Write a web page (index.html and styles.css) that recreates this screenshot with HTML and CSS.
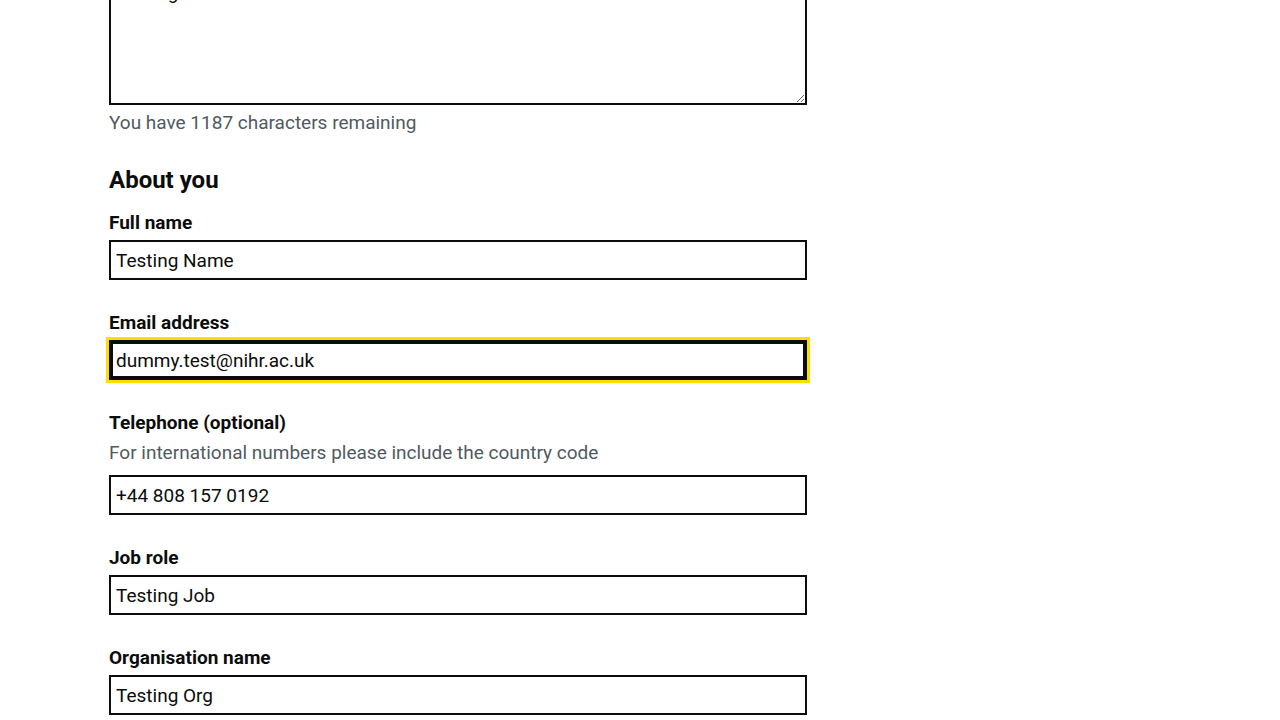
FILE: index.html
```html
<!DOCTYPE html>
<html lang="en">
<head>
<meta charset="utf-8">
<title>Contact form</title>
<link rel="stylesheet" href="styles.css">
</head>
<body>
<main class="page">
  <form class="form-column">
    <div class="form-group">
      <textarea class="textarea" rows="5">Testing</textarea>
      <div class="count-message">You have 1187 characters remaining</div>
    </div>

    <h2 class="heading">About you</h2>

    <div class="form-group">
      <label class="label" for="full-name">Full name</label>
      <input class="input" id="full-name" type="text" value="Testing Name">
    </div>

    <div class="form-group">
      <label class="label" for="email">Email address</label>
      <input class="input input-focus" id="email" type="text" value="dummy.test@nihr.ac.uk">
    </div>

    <div class="form-group">
      <label class="label" for="tel">Telephone (optional)</label>
      <div class="hint">For international numbers please include the country code</div>
      <input class="input" id="tel" type="text" value="+44 808 157 0192">
    </div>

    <div class="form-group">
      <label class="label" for="job">Job role</label>
      <input class="input" id="job" type="text" value="Testing Job">
    </div>

    <div class="form-group">
      <label class="label" for="org">Organisation name</label>
      <input class="input" id="org" type="text" value="Testing Org">
    </div>
  </form>
</main>
</body>
</html>
```
FILE: styles.css
```css
html, body {
  margin: 0;
  padding: 0;
  background: #ffffff;
  overflow: hidden;
}
body {
  font-family: Roboto, "Liberation Sans", Arial, sans-serif;
  color: #0b0c0c;
  font-size: 19px;
  line-height: 25px;
}
.page {
  padding: 0 109px;
}
.form-column {
  width: 698px;
  display: flex;
  flex-direction: column;
}
.form-group {
  display: flex;
  flex-direction: column;
  margin-bottom: 30px;
}
.textarea {
  display: block;
  box-sizing: border-box;
  width: 100%;
  height: 132px;
  margin: -27px 0 0 0;
  padding: 5px;
  border: 2px solid #0b0c0c;
  border-radius: 0;
  font-family: inherit;
  font-size: 19px;
  line-height: 25px;
  color: #0b0c0c;
  resize: vertical;
}
.count-message {
  margin-top: 5px;
  color: #505a5f;
}
.heading {
  margin: 0 0 15px 0;
  font-size: 24px;
  line-height: 30px;
  font-weight: 700;
}
.label {
  display: block;
  margin-bottom: 5px;
  font-weight: 700;
}
.hint {
  margin-bottom: 10px;
  color: #505a5f;
}
.input {
  display: block;
  box-sizing: border-box;
  width: 100%;
  height: 40px;
  margin: 0;
  padding: 5px;
  border: 2px solid #0b0c0c;
  border-radius: 0;
  font-family: inherit;
  font-size: 19px;
  line-height: 25px;
  color: #0b0c0c;
  background: #ffffff;
}
.input-focus {
  outline: 3px solid #ffdd00;
  outline-offset: 0;
  box-shadow: inset 0 0 0 2px #0b0c0c;
}
```
